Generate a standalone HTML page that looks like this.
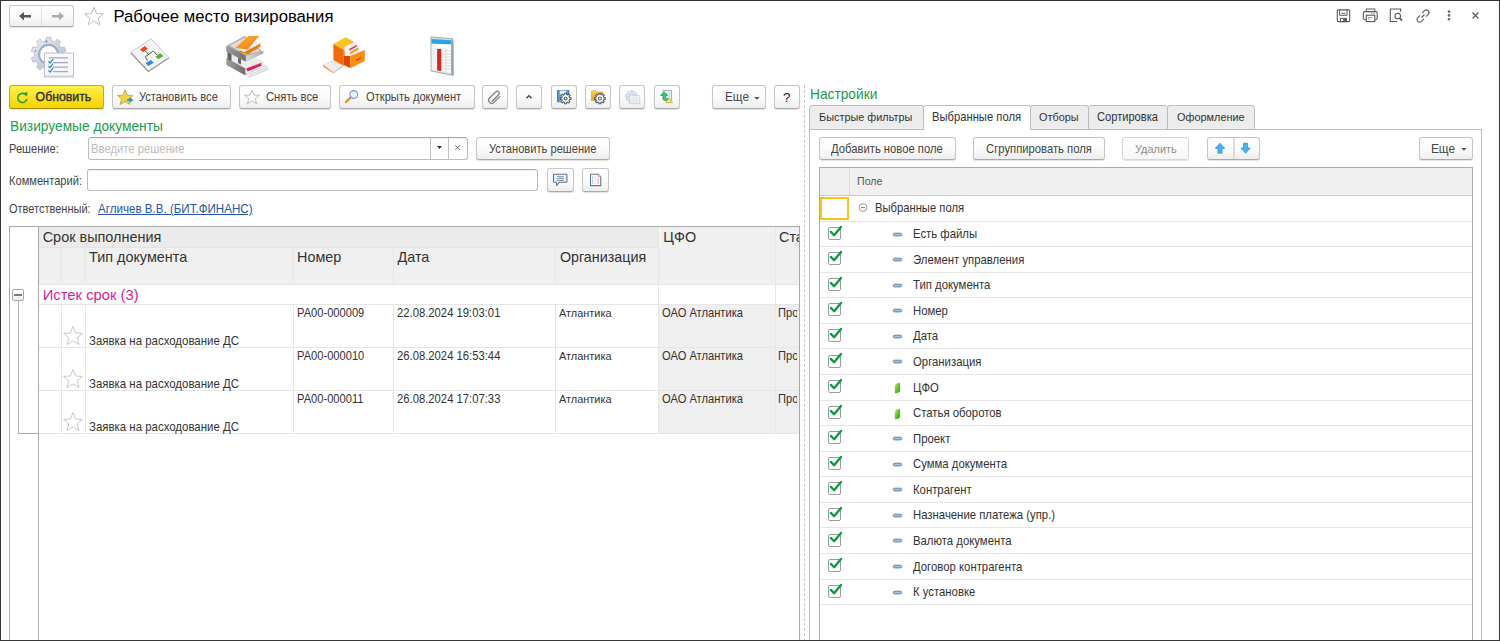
<!DOCTYPE html><html><head><meta charset="utf-8"><style>
*{margin:0;padding:0}
html,body{width:1500px;height:641px;overflow:hidden;background:#fff}
body{position:relative;font-family:"Liberation Sans",sans-serif}
.t{position:absolute;line-height:0;white-space:nowrap;z-index:3}
.btn{position:absolute;box-sizing:border-box;border:1px solid #c6c6c6;border-bottom-color:#a9a9a9;border-radius:3px;background:linear-gradient(#ffffff 0%,#fbfbfb 50%,#eeeeee 100%);box-shadow:0 1px 1px rgba(0,0,0,0.12)}
.ybtn{border-color:#c7ad00;border-bottom-color:#a89000;background:linear-gradient(#fff04a 0%,#fde024 50%,#f2d400 100%)}
.dis{background:linear-gradient(#fff,#f7f7f7);border-color:#d6d6d6}
.inp{position:absolute;box-sizing:border-box;border:1px solid #bcbcbc;border-top-color:#a8a8a8;border-radius:3px;background:#fff;box-shadow:inset 0 1px 1px rgba(0,0,0,0.06)}
.tab{position:absolute;box-sizing:border-box;border:1px solid #bdbdbd;border-radius:3px 3px 0 0;background:#ececec}
.tab.act{background:#fff;border-bottom:none;z-index:2}
.chk{position:absolute;width:13px;height:13px;box-sizing:border-box;border:1px solid #9b9b9b;border-radius:2px;background:#fff}
#frame{position:absolute;left:0;top:0;width:1500px;height:641px;box-sizing:border-box;border:1px solid #363636;z-index:50;pointer-events:none}
</style></head><body><div class="btn" style="left:9px;top:5px;width:65px;height:22px;"></div>
<div style="position:absolute;left:41px;top:6px;width:1px;height:20px;background:#e0e0e0"></div>
<svg style="position:absolute;left:18px;top:11px" width="16" height="10" viewBox="0 0 16 10"><path d="M1 5 L6 1 L6 4 L13 4 L13 6.5 L6 6.5 L6 9.5 Z" fill="#555"/></svg>
<svg style="position:absolute;left:50px;top:11px" width="16" height="10" viewBox="0 0 16 10"><path d="M14 5 L9 1 L9 4 L2 4 L2 6.5 L9 6.5 L9 9.5 Z" fill="#aaa"/></svg>
<svg style="position:absolute;left:83px;top:6px" width="22" height="20" viewBox="0 0 22 20"><path d="M11 1.2 L13.6 7.6 L20.4 7.9 L15.1 12.2 L16.9 18.9 L11 15.1 L5.1 18.9 L6.9 12.2 L1.6 7.9 L8.4 7.6 Z" fill="none" stroke="#b9c1c9" stroke-width="1"/></svg>
<div class="t" style="left:113.5px;top:17.11px;font-size:16.70px;color:#000;">Рабочее место визирования</div>
<svg style="position:absolute;left:1336px;top:9px" width="16" height="14" viewBox="0 0 16 14"><rect x="1.3" y="0.9" width="12.4" height="11.7" rx="1.2" fill="none" stroke="#5a5a5a" stroke-width="1.1"/><path d="M3.6 1 V6.3 H11 V1" fill="none" stroke="#5a5a5a" stroke-width="1"/><path d="M5.2 4.3 H9.5" stroke="#5a5a5a" stroke-width="0.9"/><rect x="4.4" y="9.4" width="6" height="3.2" fill="none" stroke="#5a5a5a" stroke-width="1"/><rect x="7.2" y="9.6" width="2.8" height="2.8" fill="#5a5a5a"/></svg>
<svg style="position:absolute;left:1362px;top:8px" width="17" height="15" viewBox="0 0 17 15"><rect x="4.3" y="1" width="8.5" height="2.6" fill="none" stroke="#5a5a5a" stroke-width="1"/><rect x="1.3" y="3.6" width="13.9" height="8.1" rx="1.6" fill="none" stroke="#5a5a5a" stroke-width="1.1"/><path d="M9.3 5.4 H10.3 M11.6 5.4 H12.6" stroke="#5a5a5a" stroke-width="0.9"/><rect x="4.3" y="7.2" width="8.5" height="6.4" fill="#fff" stroke="#5a5a5a" stroke-width="1.1"/><path d="M6 9.6 H10.2 M6 10.9 H7.5" stroke="#888" stroke-width="0.8"/></svg>
<svg style="position:absolute;left:1389px;top:8px" width="15" height="15" viewBox="0 0 15 15"><path d="M8.2 13.5 H1.3 V1 H11.7 V3.8" fill="none" stroke="#5a5a5a" stroke-width="1.1"/><circle cx="8.7" cy="8" r="2.8" fill="none" stroke="#5a5a5a" stroke-width="1.1"/><path d="M10.7 10.1 L13.2 12.6" stroke="#5a5a5a" stroke-width="1.6"/></svg>
<svg style="position:absolute;left:1415px;top:8px" width="16" height="15" viewBox="0 0 16 15"><path d="M6.5 9.5 L9.5 6.5" stroke="#666" stroke-width="1.2"/><path d="M7.2 5 L9.5 2.7 a2.6 2.6 0 0 1 3.7 3.7 L10.9 8.7" fill="none" stroke="#666" stroke-width="1.2"/><path d="M8.8 11 L6.5 13.3 a2.6 2.6 0 0 1 -3.7 -3.7 L5.1 7.3" fill="none" stroke="#666" stroke-width="1.2"/></svg>
<svg style="position:absolute;left:1446.2px;top:10px" width="6" height="11" viewBox="0 0 6 11"><circle cx="3" cy="1.6" r="1.3" fill="#666"/><circle cx="3" cy="5.4" r="1.3" fill="#666"/><circle cx="3" cy="9.2" r="1.3" fill="#666"/></svg>
<svg style="position:absolute;left:1471px;top:11px" width="9" height="9" viewBox="0 0 9 9"><path d="M1.5 1.5 L7.5 7.5 M7.5 1.5 L1.5 7.5" stroke="#555" stroke-width="1.1"/></svg>
<svg style="position:absolute;left:28px;top:32px" width="52" height="48" viewBox="0 0 52 48">
<defs><linearGradient id="gg" x1="0" y1="0" x2="0.8" y2="1"><stop offset="0" stop-color="#eef1f5"/><stop offset="0.55" stop-color="#c9d3de"/><stop offset="1" stop-color="#a9bdd3"/></linearGradient></defs>
<path d="M18.12,8.52 L18.30,5.15 L22.90,5.15 L23.08,8.52 L26.81,9.73 L28.93,7.11 L32.66,9.82 L30.83,12.65 L33.13,15.82 L36.39,14.95 L37.81,19.33 L34.66,20.54 L34.66,24.46 L37.81,25.67 L36.39,30.05 L33.13,29.18 L30.83,32.35 L32.66,35.18 L28.93,37.89 L26.81,35.27 L23.08,36.48 L22.90,39.85 L18.30,39.85 L18.12,36.48 L14.39,35.27 L12.27,37.89 L8.54,35.18 L10.37,32.35 L8.07,29.18 L4.81,30.05 L3.39,25.67 L6.54,24.46 L6.54,20.54 L3.39,19.33 L4.81,14.95 L8.07,15.82 L10.37,12.65 L8.54,9.82 L12.27,7.11 L14.39,9.73 Z" fill="url(#gg)" stroke="#a7b6c6" stroke-width="0.7" stroke-linejoin="round"/>
<circle cx="20.6" cy="22.5" r="9.6" fill="#fff" stroke="#9db0c5" stroke-width="2.2"/>
<circle cx="18.5" cy="9.5" r="0.9" fill="#6d7d90"/>
<circle cx="7.5" cy="19" r="0.8" fill="#6d7d90"/>
<rect x="16.5" y="21" width="29" height="24" fill="#f6f7f9" stroke="#b7bcc6" stroke-width="0.9"/>
<rect x="17" y="43.5" width="28.5" height="1.5" fill="#cfd3da"/>
<path d="M21 25.8 H40 M25 30.7 H40 M25 35.2 H40 M25 39.7 H40" stroke="#a8a4c4" stroke-width="1.3"/>
<path d="M20.5 29.5 l1.6 1.6 l3 -4 M20.5 34 l1.6 1.6 l3 -4 M20.5 38.5 l1.6 1.6 l3 -4" stroke="#2a86d6" stroke-width="1.3" fill="none"/>
</svg>
<svg style="position:absolute;left:125px;top:34px" width="50" height="42" viewBox="0 0 50 42">
<path d="M5.6 18.3 L25.9 4.9 L43.9 23.6 L23.3 37 Z" fill="#f5f5f7" stroke="#c9c9c9" stroke-width="1" stroke-linejoin="round"/>
<path d="M6 19 L23.3 37.5 L43.9 24" fill="none" stroke="#9a9a9a" stroke-width="1.2" stroke-linejoin="round"/>
<path d="M20.5 17 L23.5 20.5 L27.5 17.5 Q28.5 17 29.5 18 L32 21 M23.5 20.5 L20.5 22.5 Q20 23 20.5 23.5 L22.5 26.5" fill="none" stroke="#3a3a3a" stroke-width="0.9"/>
<path d="M15.1 15.4 L19.7 12.1 L22.9 14.7 L18 18.3 Z" fill="#ee4a12"/>
<path d="M30.5 22.6 L35.4 19.3 L38.3 22 L33.4 25.2 Z" fill="#5bb22c"/>
<path d="M20.6 29.2 L25.9 25.9 L28.8 28.8 L23.3 32.1 Z" fill="#2f88dc"/>
</svg>
<svg style="position:absolute;left:220px;top:32px" width="55" height="48" viewBox="0 0 55 48">
<defs>
<linearGradient id="tL" x1="0" y1="0" x2="1" y2="0"><stop offset="0" stop-color="#9c9c9c"/><stop offset="1" stop-color="#6f6f6f"/></linearGradient>
<linearGradient id="tR" x1="0" y1="0" x2="1" y2="0"><stop offset="0" stop-color="#d8d8d8"/><stop offset="1" stop-color="#a9a9a9"/></linearGradient>
<linearGradient id="tO" x1="0" y1="0" x2="1" y2="1"><stop offset="0" stop-color="#ffb13b"/><stop offset="1" stop-color="#f07c0a"/></linearGradient>
</defs>
<path d="M6.4 26 L22 18 L44 30 L25.5 37 Z" fill="#ececec"/>
<path d="M6.4 26 L25.5 36.5 L25.5 43.4 L6.4 33 Z" fill="url(#tL)"/>
<path d="M25.5 36.5 L42 30 L42 35 L25.5 43.4 Z" fill="#bdbdbd"/>
<path d="M25.5 38.5 L44 31 L48 37.5 L29 45.7 Z" fill="#f7f7f7" stroke="#cfcfcf" stroke-width="0.4"/>
<path d="M28 41.3 L46.5 33.8 M28.8 43 L47.3 35.5 M29.5 44.6 L48 37.2" stroke="#b5b5b5" stroke-width="0.55"/>
<path d="M26.6 36.6 L40.8 31.3 L41.6 33.8 L27.4 39.4 Z" fill="#e8175a"/>
<path d="M7.5 19 L11.5 21 L11.5 29 L7.5 27 Z" fill="#5f5f5f"/>
<path d="M18 24.5 L21 26 L21 32.5 L18 31 Z" fill="#6a6a6a"/>
<path d="M6.4 13.9 L24.7 4.1 L43.4 20.5 L25.8 29.6 L6.4 19.5 Z" fill="#a7a7a7"/>
<path d="M6.4 13.9 L25.8 23.8 L25.8 29.6 L6.4 19.5 Z" fill="url(#tL)"/>
<path d="M25.8 23.8 L43.4 19 L43.4 21.5 L25.8 29.6 Z" fill="url(#tR)"/>
<path d="M9.5 13.6 L24.6 5.6 L40.5 19.2 L25.8 22.8 Z" fill="#dedede"/>
<path d="M17.5 19.5 L40.4 11.2 L40.4 14.5 L28 22.5 Z" fill="#f07a0a"/>
<path d="M19.5 17.8 L37 9.5 L38.8 12.3 L24 20.3 Z" fill="#f2f4f8"/>
<path d="M15 16 L28.5 4.1 L39.3 4.1 L27.5 17.5 Z" fill="url(#tO)"/>
</svg>
<svg style="position:absolute;left:318px;top:32px" width="54" height="48" viewBox="0 0 54 48">
<path d="M5.2 33 L15 28.5 L24.7 33.5 L15.5 40.4 Z" fill="#ededed" stroke="#c8c8c8" stroke-width="0.5"/>
<path d="M5.2 33 L15.5 40.4 L15.5 41.2 L5.2 34.5 Z" fill="#f07a1a"/>
<path d="M15.5 40.4 L24.7 33.5 L24.7 35 L15.5 41.2 Z" fill="#bdbdbd"/>
<path d="M15.4 12 L27.7 5.2 L35.2 9.4 L25.8 18 Z" fill="#ffc21e"/>
<path d="M15.4 12 L25.8 18 L25.8 33.7 L15.4 28 Z" fill="#f06b0c"/>
<path d="M25.8 18 L35.2 9.4 L35.2 22 L25.8 24 Z" fill="#ff8d18"/>
<path d="M26.2 15 L37 9.7 L41.2 14 L41.2 24.7 L27 24 Z" fill="#f0f0f0"/>
<path d="M31 17 L38.5 13 L39 14.5 L31.5 18.5 Z" fill="#ec2a6e"/>
<path d="M32 20 L40.5 15.5 L40.8 17.5 L32.5 22 Z" fill="#f69a1e"/>
<path d="M25.8 24 L32.2 24 L32.2 36 L25.8 33 Z" fill="#e2430a"/>
<path d="M32.2 24 L46.8 18 L46.8 29 L32.2 36.3 Z" fill="#ff8a12"/>
<path d="M38.2 28.5 L43 26" stroke="#b2520a" stroke-width="1.2"/>
</svg>
<svg style="position:absolute;left:420px;top:32px" width="45" height="48" viewBox="0 0 45 48">
<path d="M10.9 4.9 L33 6.7 L33.3 43.4 L11.2 39 Z" fill="#d5dce4" stroke="#8e9bab" stroke-width="0.8"/>
<path d="M11.6 7.1 L31.1 8.3 L31.1 12.4 L11.6 11.6 Z" fill="#27a2e6"/>
<path d="M11.8 12 L31 12.6 L31 41 L11.8 38 Z" fill="#fbfbfb"/>
<path d="M11.8 12 L16.5 12.2 L16.5 38.7 L11.8 38 Z" fill="#eef3f8"/>
<path d="M17.1 16.9 L21.3 17 L21.3 39 L17.1 38.6 Z" fill="#d8261a"/>
<path d="M21.5 19 H31 M21.5 22 H31 M21.5 25 H31 M21.5 28 H31 M21.5 31 H31 M21.5 34 H31 M21.5 37 H31" stroke="#c9c9c9" stroke-width="0.6"/>
<path d="M26 17 V40" stroke="#c9c9c9" stroke-width="0.6"/>
<path d="M31 8 L33.3 8.5 L33.3 43.4 L31 42 Z" fill="#98a6b6"/>
</svg>
<div class="btn ybtn" style="left:9px;top:85px;width:95px;height:24px"></div>
<svg style="position:absolute;left:16px;top:91px" width="13" height="13" viewBox="0 0 13 13"><path d="M10.2 4.3 A4.6 4.6 0 1 0 10.9 8" fill="none" stroke="#1fa23a" stroke-width="1.6"/><path d="M7.6 1.8 L11.6 1.2 L11.2 5.6 Z" fill="#1fa23a"/></svg>
<div class="t" style="left:35.6px;top:96.74px;font-size:12.30px;color:#333;-webkit-text-stroke:0.4px #333;">Обновить</div>
<div class="btn" style="left:112px;top:85px;width:119px;height:24px;"></div>
<svg style="position:absolute;left:117px;top:89px" width="18" height="17" viewBox="0 0 18 17"><path d="M8 1 L10.2 6.2 L15.8 6.5 L11.5 10 L13 15.5 L8 12.4 L3 15.5 L4.5 10 L0.5 6.5 L5.8 6.2 Z" fill="#f0d243" stroke="#b89a20" stroke-width="0.7"/><path d="M10 11 h5 l-2 -2 M15 11 l-2 2" fill="#2a8ee0" stroke="#2a8ee0" stroke-width="1.4"/></svg>
<div class="t" style="left:138.9px;top:97.45px;font-size:11.99px;color:#444;transform:scaleX(0.9259);transform-origin:0 0;">Установить все</div>
<div class="btn" style="left:239px;top:85px;width:92px;height:24px;"></div>
<svg style="position:absolute;left:244px;top:89px" width="17" height="16" viewBox="0 0 17 16"><path d="M8 1.2 L10 6 L15.3 6.3 L11.2 9.7 L12.6 14.8 L8 11.9 L3.4 14.8 L4.8 9.7 L0.7 6.3 L6 6 Z" fill="#fafafa" stroke="#b5b5b5" stroke-width="0.9"/></svg>
<div class="t" style="left:265.6px;top:97.39px;font-size:12.15px;color:#444;transform:scaleX(0.9259);transform-origin:0 0;">Снять все</div>
<div class="btn" style="left:339px;top:85px;width:136px;height:24px;"></div>
<svg style="position:absolute;left:343px;top:88px" width="16" height="16" viewBox="0 0 16 16"><path d="M7.3 9.8 L3 14" stroke="#e5911c" stroke-width="2.3" stroke-linecap="round"/><circle cx="10.7" cy="6.5" r="3.9" fill="#e4f6fd" stroke="#7896da" stroke-width="1.1"/></svg>
<div class="t" style="left:365.6px;top:97.42px;font-size:12.06px;color:#444;transform:scaleX(0.9259);transform-origin:0 0;">Открыть документ</div>
<div class="btn" style="left:482px;top:85px;width:26px;height:24px;"></div>
<svg style="position:absolute;left:487px;top:89px" width="16" height="16" viewBox="0 0 16 16"><path d="M5.2 12.3 L11.6 5.8 a2 2 0 0 0 -2.9 -2.9 L2.6 9 a3.1 3.1 0 0 0 4.4 4.4 L12.8 7.6" fill="none" stroke="#7a7a7a" stroke-width="1.25" stroke-linecap="round"/></svg>
<div class="btn" style="left:516px;top:85px;width:26px;height:24px;"></div>
<svg style="position:absolute;left:524px;top:93px" width="10" height="7" viewBox="0 0 10 7"><path d="M2.5 5.2 L5 2.6 L7.5 5.2" fill="none" stroke="#3a3a3a" stroke-width="1.3"/></svg>
<div class="btn" style="left:551px;top:85px;width:26px;height:24px;"></div>
<svg style="position:absolute;left:557px;top:90px" width="17" height="15" viewBox="0 0 17 15"><defs><linearGradient id="fl" x1="0" y1="0" x2="1" y2="0"><stop offset="0" stop-color="#3f7fcf"/><stop offset="0.5" stop-color="#a9cdf3"/><stop offset="1" stop-color="#3f7fcf"/></linearGradient></defs><path d="M0 0.2 H12 V10 L11 11.8 H0 Z" fill="url(#fl)" stroke="#2f66b0" stroke-width="0.6"/><rect x="3" y="0.8" width="6" height="3.5" fill="#f4f7fb" stroke="#9fb6d0" stroke-width="0.5"/><g transform="translate(0,0)"><path d="M7.69,4.60 L7.65,3.18 L9.55,3.18 L9.51,4.60 L10.71,5.10 L11.69,4.07 L13.03,5.41 L12.00,6.39 L12.50,7.59 L13.92,7.55 L13.92,9.45 L12.50,9.41 L12.00,10.61 L13.03,11.59 L11.69,12.93 L10.71,11.90 L9.51,12.40 L9.55,13.82 L7.65,13.82 L7.69,12.40 L6.49,11.90 L5.51,12.93 L4.17,11.59 L5.20,10.61 L4.70,9.41 L3.28,9.45 L3.28,7.55 L4.70,7.59 L5.20,6.39 L4.17,5.41 L5.51,4.07 L6.49,5.10 Z" fill="#fff" stroke="#56606a" stroke-width="1.1" stroke-linejoin="round"/><circle cx="8.6" cy="8.5" r="1.5" fill="none" stroke="#56606a" stroke-width="1.1"/></g></svg>
<div class="btn" style="left:585px;top:85px;width:26px;height:24px;"></div>
<svg style="position:absolute;left:591px;top:90px" width="17" height="15" viewBox="0 0 17 15"><defs><linearGradient id="fo" x1="0" y1="0" x2="0" y2="1"><stop offset="0" stop-color="#ffd34a"/><stop offset="1" stop-color="#e9a21c"/></linearGradient></defs><path d="M0.3 2 Q0.5 0.8 1.5 0.8 H4.5 L6 2 H12 V10.5 H0.3 Z" fill="url(#fo)" stroke="#d28f18" stroke-width="0.5"/><path d="M7.99,4.60 L7.95,3.18 L9.85,3.18 L9.81,4.60 L11.01,5.10 L11.99,4.07 L13.33,5.41 L12.30,6.39 L12.80,7.59 L14.22,7.55 L14.22,9.45 L12.80,9.41 L12.30,10.61 L13.33,11.59 L11.99,12.93 L11.01,11.90 L9.81,12.40 L9.85,13.82 L7.95,13.82 L7.99,12.40 L6.79,11.90 L5.81,12.93 L4.47,11.59 L5.50,10.61 L5.00,9.41 L3.58,9.45 L3.58,7.55 L5.00,7.59 L5.50,6.39 L4.47,5.41 L5.81,4.07 L6.79,5.10 Z" fill="#fff" stroke="#56606a" stroke-width="1.1" stroke-linejoin="round"/><circle cx="8.9" cy="8.5" r="1.5" fill="none" stroke="#56606a" stroke-width="1.1"/></svg>
<div class="btn" style="left:619px;top:85px;width:26px;height:24px;"></div>
<svg style="position:absolute;left:625px;top:90px" width="16" height="15" viewBox="0 0 16 15"><path d="M5.57,1.99 L5.58,0.67 L7.42,0.67 L7.43,1.99 L8.69,2.45 L9.54,1.44 L10.95,2.63 L10.11,3.65 L10.78,4.80 L12.08,4.58 L12.40,6.40 L11.10,6.63 L10.87,7.95 L12.01,8.61 L11.09,10.21 L9.94,9.56 L8.91,10.42 L9.36,11.66 L7.63,12.29 L7.17,11.05 L5.83,11.05 L5.37,12.29 L3.64,11.66 L4.09,10.42 L3.06,9.56 L1.91,10.21 L0.99,8.61 L2.13,7.95 L1.90,6.63 L0.60,6.40 L0.92,4.58 L2.22,4.80 L2.89,3.65 L2.05,2.63 L3.46,1.44 L4.31,2.45 Z" fill="#e3ecf5" stroke="#b7cbe0" stroke-width="0.9" stroke-linejoin="round"/><circle cx="6.5" cy="6.5" r="2.6" fill="#fff" stroke="#a9c2dc" stroke-width="0.9"/><rect x="4.6" y="5.8" width="10.2" height="7.9" fill="#f6f8fa" stroke="#c6ced6" stroke-width="0.8"/><path d="M7.5 8 H13.5 M7.5 10 H13.5 M7.5 12 H13.5" stroke="#c9d2dc" stroke-width="0.7"/><path d="M5.3 9.5 l0.8 0.8 l1.2 -1.5 M5.3 11.5 l0.8 0.8 l1.2 -1.5" stroke="#a9c6e6" stroke-width="0.6" fill="none"/></svg>
<div class="btn" style="left:654px;top:85px;width:26px;height:24px;"></div>
<svg style="position:absolute;left:659px;top:89px" width="15" height="15" viewBox="0 0 15 15"><rect x="4" y="1.5" width="8.5" height="9.5" fill="#edf0f3" stroke="#93a0ad" stroke-width="0.8"/><path d="M6 4 H10.5 V9" fill="none" stroke="#c9d0d7" stroke-width="0.8"/><path d="M1.5 6.5 L5.2 3 L8.8 6.5 H6.6 V8.6 Q6.6 9.6 7.6 9.6 H9.5 V11.5 H6.8 Q4.3 11.5 4.3 9 V6.5 Z" fill="#22d36e" stroke="#14a045" stroke-width="0.7" stroke-linejoin="round"/><path d="M6.5 13.6 L10 9.2 L13.6 13.6 Z" fill="#f6e27a" stroke="#d3a92a" stroke-width="0.8" stroke-linejoin="round"/></svg>
<div class="btn" style="left:712px;top:85px;width:54px;height:24px;"></div>
<div class="t" style="left:724.5px;top:96.88px;font-size:12.74px;color:#444;transform:scaleX(0.9259);transform-origin:0 0;">Еще</div>
<svg style="position:absolute;left:754px;top:97px" width="6" height="4" viewBox="0 0 6 4"><path d="M0.2 0 H5.6 L2.9 2.8 Z" fill="#555"/></svg>
<div class="btn" style="left:774px;top:85px;width:26px;height:24px;"></div>
<div class="t" style="left:783px;top:98.32px;font-size:13.50px;color:#222;">?</div>
<div class="t" style="left:9.5px;top:125.90px;font-size:14.71px;color:#1c9b4b;transform:scaleX(0.9346);transform-origin:0 0;">Визируемые документы</div>
<div class="t" style="left:9.4px;top:149.45px;font-size:11.99px;color:#444;transform:scaleX(0.9259);transform-origin:0 0;">Решение:</div>
<div class="inp" style="left:88px;top:137px;width:380px;height:23px"></div>
<div style="position:absolute;left:430px;top:138px;width:1px;height:21px;background:#c2c2c2"></div>
<div style="position:absolute;left:448px;top:138px;width:1px;height:21px;background:#c2c2c2"></div>
<svg style="position:absolute;left:436.5px;top:146px" width="5" height="4" viewBox="0 0 5 4"><path d="M0 0 H5 L2.5 3 Z" fill="#333"/></svg>
<svg style="position:absolute;left:454px;top:144px" width="8" height="8" viewBox="0 0 8 8"><path d="M1.3 1.3 L5.9 5.9 M5.9 1.3 L1.3 5.9" stroke="#555" stroke-width="0.9"/></svg>
<div class="t" style="left:91px;top:148.87px;font-size:12.20px;color:#bdbdbd;transform:scaleX(0.9259);transform-origin:0 0;">Введите решение</div>
<div class="btn" style="left:476px;top:137px;width:134px;height:23px;"></div>
<div class="t" style="left:488.5px;top:148.93px;font-size:12.03px;color:#444;transform:scaleX(0.9259);transform-origin:0 0;">Установить решение</div>
<div class="t" style="left:9.4px;top:180.75px;font-size:11.99px;color:#444;transform:scaleX(0.9259);transform-origin:0 0;">Комментарий:</div>
<div class="inp" style="left:87px;top:169px;width:451px;height:22px"></div>
<div class="btn" style="left:547px;top:168px;width:27px;height:24px;"></div>
<svg style="position:absolute;left:551px;top:172px" width="19" height="16" viewBox="0 0 19 16"><path d="M3.2 2.3 Q2.5 2.3 2.5 3 V9.6 Q2.5 10.3 3.2 10.3 H5.4 L5.6 13.5 L8.2 10.3 H15.2 Q15.9 10.3 15.9 9.6 V3 Q15.9 2.3 15.2 2.3 Z" fill="#eef4fb" stroke="#5d7693" stroke-width="1.1" stroke-linejoin="round"/><path d="M6 4.7 H12.8 M6 6.6 H12.8 M6 8.5 H12.8" stroke="#6f849c" stroke-width="0.9"/></svg>
<div class="btn" style="left:582px;top:168px;width:27px;height:24px;"></div>
<svg style="position:absolute;left:588px;top:172px" width="15" height="16" viewBox="0 0 15 16"><path d="M2.5 2.3 H10.3 L12.8 4.8 V13.6 H2.5 Z" fill="#fbfbfc" stroke="#5d7693" stroke-width="1.1" stroke-linejoin="round"/><path d="M10.3 2.3 V4.8 H12.8" fill="#dfe6ee" stroke="#8a9bb0" stroke-width="0.6"/><path d="M4.6 4.6 V5.4 M4.6 6.6 V7.4 M4.6 8.6 V9.4 M4.6 10.6 V11.6" stroke="#4f8fd0" stroke-width="1"/><path d="M7.2 4.6 V12.2" stroke="#c9c9c9" stroke-width="1" stroke-dasharray="1 1"/><path d="M10.2 6.6 V7.4 M10.2 8.6 V9.4 M10.2 10.6 V11.6" stroke="#f05a3a" stroke-width="1.1"/></svg>
<div class="t" style="left:9.4px;top:209.08px;font-size:11.88px;color:#444;transform:scaleX(0.9259);transform-origin:0 0;">Ответственный:</div>
<div class="t" style="left:98px;top:208.86px;font-size:12.53px;color:#2255aa;transform:scaleX(0.9259);transform-origin:0 0;text-decoration:underline;">Агличев В.В. (БИТ.ФИНАНС)</div>
<div style="position:absolute;left:0;top:0;width:799px;height:641px;overflow:hidden">
<div style="position:absolute;left:9px;top:226px;width:791px;height:415px;border:1px solid #a9a9a9;border-bottom:none;box-sizing:border-box;background:#fff"></div>
<div style="position:absolute;left:39px;top:227px;width:760px;height:57px;background:#f0f0f0"></div>
<div style="position:absolute;left:38px;top:227px;width:1px;height:414px;background:#a9a9a9"></div>
<div style="position:absolute;left:39px;top:227px;width:619px;height:20px;background:#ebebeb"></div>
<div style="position:absolute;left:659px;top:227px;width:2px;height:21px;background:#f5f5f5"></div>
<div style="position:absolute;left:39px;top:247px;width:620px;height:1px;background:#e4e4e4"></div>
<div style="position:absolute;left:61px;top:248px;width:1px;height:36px;background:#e6e6e6"></div>
<div style="position:absolute;left:85px;top:248px;width:1px;height:36px;background:#e6e6e6"></div>
<div style="position:absolute;left:293px;top:248px;width:1px;height:36px;background:#e6e6e6"></div>
<div style="position:absolute;left:393px;top:248px;width:1px;height:36px;background:#e6e6e6"></div>
<div style="position:absolute;left:555px;top:248px;width:1px;height:36px;background:#e6e6e6"></div>
<div style="position:absolute;left:658px;top:227px;width:1px;height:57px;background:#e6e6e6"></div>
<div style="position:absolute;left:775px;top:227px;width:1px;height:57px;background:#e6e6e6"></div>
<div class="t" style="left:42.7px;top:236.79px;font-size:14.45px;color:#333;">Срок выполнения</div>
<div class="t" style="left:89px;top:256.61px;font-size:14.40px;color:#333;">Тип документа</div>
<div class="t" style="left:297px;top:256.61px;font-size:14.40px;color:#333;">Номер</div>
<div class="t" style="left:397.5px;top:256.61px;font-size:14.40px;color:#333;">Дата</div>
<div class="t" style="left:559.9px;top:256.65px;font-size:14.30px;color:#333;">Организация</div>
<div class="t" style="left:663.3px;top:236.81px;font-size:14.40px;color:#333;">ЦФО</div>
<div class="t" style="left:779px;top:236.81px;font-size:14.40px;color:#333;">Статья</div>
<div style="position:absolute;left:39px;top:284px;width:760px;height:1px;background:#e6e6e6"></div>
<div style="position:absolute;left:658px;top:285px;width:1px;height:20px;background:#e6e6e6"></div>
<div style="position:absolute;left:775px;top:285px;width:1px;height:20px;background:#e6e6e6"></div>
<div class="t" style="left:42.7px;top:294.67px;font-size:14.80px;color:#d4239b;">Истек срок (3)</div>
<div style="position:absolute;left:39px;top:304px;width:760px;height:1px;background:#e6e6e6"></div>
<div style="position:absolute;left:12px;top:289px;width:12px;height:12px;border:1px solid #a9a9a9;box-sizing:border-box;background:linear-gradient(#fff,#ededed);border-radius:2px"></div>
<div style="position:absolute;left:14px;top:294px;width:8px;height:1.6px;background:#7a7a7a"></div>
<div style="position:absolute;left:18px;top:301px;width:1px;height:133px;background:#b0b0b0"></div>
<div style="position:absolute;left:18px;top:433px;width:20px;height:1px;background:#a9a9a9"></div>
<div style="position:absolute;left:658px;top:305px;width:117px;height:42px;background:#efefef"></div>
<div style="position:absolute;left:776px;top:305px;width:23px;height:42px;background:#efefef"></div>
<div style="position:absolute;left:61px;top:305px;width:1px;height:42px;background:#e6e6e6"></div>
<div style="position:absolute;left:85px;top:305px;width:1px;height:42px;background:#e6e6e6"></div>
<div style="position:absolute;left:293px;top:305px;width:1px;height:42px;background:#e6e6e6"></div>
<div style="position:absolute;left:393px;top:305px;width:1px;height:42px;background:#e6e6e6"></div>
<div style="position:absolute;left:555px;top:305px;width:1px;height:42px;background:#e6e6e6"></div>
<div style="position:absolute;left:658px;top:305px;width:1px;height:42px;background:#e6e6e6"></div>
<div style="position:absolute;left:775px;top:305px;width:1px;height:42px;background:#e6e6e6"></div>
<div style="position:absolute;left:39px;top:347px;width:760px;height:1px;background:#e6e6e6"></div>
<svg style="position:absolute;left:62px;top:325px" width="22" height="22" viewBox="0 0 22 22"><path d="M11 1.5 L13.6 8 L20.5 8.4 L15.2 12.8 L17 19.6 L11 15.8 L5 19.6 L6.8 12.8 L1.5 8.4 L8.4 8 Z" fill="#fff" stroke="#c9c9c9" stroke-width="1"/></svg>
<div class="t" style="left:296.6px;top:312.63px;font-size:12.03px;color:#333;transform:scaleX(0.9259);transform-origin:0 0;">РА00-000009</div>
<div class="t" style="left:397.2px;top:312.58px;font-size:12.18px;color:#333;transform:scaleX(0.9259);transform-origin:0 0;">22.08.2024 19:03:01</div>
<div class="t" style="left:558.5px;top:312.71px;font-size:11.82px;color:#333;transform:scaleX(0.9259);transform-origin:0 0;">Атлантика</div>
<div class="t" style="left:662.1px;top:312.62px;font-size:12.06px;color:#333;transform:scaleX(0.9259);transform-origin:0 0;">ОАО Атлантика</div>
<div style="position:absolute;left:776px;top:305px;width:21px;height:42px;overflow:hidden"><div style="position:absolute;left:-776px;top:-305px">
<div class="t" style="left:778.1px;top:312.62px;font-size:12.06px;color:#333;transform:scaleX(0.9259);transform-origin:0 0;">Проект</div>
</div></div>
<div class="t" style="left:88.6px;top:340.52px;font-size:12.37px;color:#333;transform:scaleX(0.9259);transform-origin:0 0;">Заявка на расходование ДС</div>
<div style="position:absolute;left:658px;top:348px;width:117px;height:42px;background:#efefef"></div>
<div style="position:absolute;left:776px;top:348px;width:23px;height:42px;background:#efefef"></div>
<div style="position:absolute;left:61px;top:348px;width:1px;height:42px;background:#e6e6e6"></div>
<div style="position:absolute;left:85px;top:348px;width:1px;height:42px;background:#e6e6e6"></div>
<div style="position:absolute;left:293px;top:348px;width:1px;height:42px;background:#e6e6e6"></div>
<div style="position:absolute;left:393px;top:348px;width:1px;height:42px;background:#e6e6e6"></div>
<div style="position:absolute;left:555px;top:348px;width:1px;height:42px;background:#e6e6e6"></div>
<div style="position:absolute;left:658px;top:348px;width:1px;height:42px;background:#e6e6e6"></div>
<div style="position:absolute;left:775px;top:348px;width:1px;height:42px;background:#e6e6e6"></div>
<div style="position:absolute;left:39px;top:390px;width:760px;height:1px;background:#e6e6e6"></div>
<svg style="position:absolute;left:62px;top:368px" width="22" height="22" viewBox="0 0 22 22"><path d="M11 1.5 L13.6 8 L20.5 8.4 L15.2 12.8 L17 19.6 L11 15.8 L5 19.6 L6.8 12.8 L1.5 8.4 L8.4 8 Z" fill="#fff" stroke="#c9c9c9" stroke-width="1"/></svg>
<div class="t" style="left:296.6px;top:355.63px;font-size:12.03px;color:#333;transform:scaleX(0.9259);transform-origin:0 0;">РА00-000010</div>
<div class="t" style="left:397.2px;top:355.58px;font-size:12.18px;color:#333;transform:scaleX(0.9259);transform-origin:0 0;">26.08.2024 16:53:44</div>
<div class="t" style="left:558.5px;top:355.71px;font-size:11.82px;color:#333;transform:scaleX(0.9259);transform-origin:0 0;">Атлантика</div>
<div class="t" style="left:662.1px;top:355.62px;font-size:12.06px;color:#333;transform:scaleX(0.9259);transform-origin:0 0;">ОАО Атлантика</div>
<div style="position:absolute;left:776px;top:348px;width:21px;height:42px;overflow:hidden"><div style="position:absolute;left:-776px;top:-348px">
<div class="t" style="left:778.1px;top:355.62px;font-size:12.06px;color:#333;transform:scaleX(0.9259);transform-origin:0 0;">Проект</div>
</div></div>
<div class="t" style="left:88.6px;top:383.52px;font-size:12.37px;color:#333;transform:scaleX(0.9259);transform-origin:0 0;">Заявка на расходование ДС</div>
<div style="position:absolute;left:658px;top:391px;width:117px;height:42px;background:#efefef"></div>
<div style="position:absolute;left:776px;top:391px;width:23px;height:42px;background:#efefef"></div>
<div style="position:absolute;left:61px;top:391px;width:1px;height:42px;background:#e6e6e6"></div>
<div style="position:absolute;left:85px;top:391px;width:1px;height:42px;background:#e6e6e6"></div>
<div style="position:absolute;left:293px;top:391px;width:1px;height:42px;background:#e6e6e6"></div>
<div style="position:absolute;left:393px;top:391px;width:1px;height:42px;background:#e6e6e6"></div>
<div style="position:absolute;left:555px;top:391px;width:1px;height:42px;background:#e6e6e6"></div>
<div style="position:absolute;left:658px;top:391px;width:1px;height:42px;background:#e6e6e6"></div>
<div style="position:absolute;left:775px;top:391px;width:1px;height:42px;background:#e6e6e6"></div>
<div style="position:absolute;left:39px;top:433px;width:760px;height:1px;background:#e6e6e6"></div>
<svg style="position:absolute;left:62px;top:411px" width="22" height="22" viewBox="0 0 22 22"><path d="M11 1.5 L13.6 8 L20.5 8.4 L15.2 12.8 L17 19.6 L11 15.8 L5 19.6 L6.8 12.8 L1.5 8.4 L8.4 8 Z" fill="#fff" stroke="#c9c9c9" stroke-width="1"/></svg>
<div class="t" style="left:296.6px;top:398.63px;font-size:12.03px;color:#333;transform:scaleX(0.9259);transform-origin:0 0;">РА00-000011</div>
<div class="t" style="left:397.2px;top:398.58px;font-size:12.18px;color:#333;transform:scaleX(0.9259);transform-origin:0 0;">26.08.2024 17:07:33</div>
<div class="t" style="left:558.5px;top:398.71px;font-size:11.82px;color:#333;transform:scaleX(0.9259);transform-origin:0 0;">Атлантика</div>
<div class="t" style="left:662.1px;top:398.62px;font-size:12.06px;color:#333;transform:scaleX(0.9259);transform-origin:0 0;">ОАО Атлантика</div>
<div style="position:absolute;left:776px;top:391px;width:21px;height:42px;overflow:hidden"><div style="position:absolute;left:-776px;top:-391px">
<div class="t" style="left:778.1px;top:398.62px;font-size:12.06px;color:#333;transform:scaleX(0.9259);transform-origin:0 0;">Проект</div>
</div></div>
<div class="t" style="left:88.6px;top:426.52px;font-size:12.37px;color:#333;transform:scaleX(0.9259);transform-origin:0 0;">Заявка на расходование ДС</div>
</div>
<div style="position:absolute;left:799px;top:226px;width:1px;height:415px;background:#a9a9a9"></div>
<div style="position:absolute;left:804px;top:85px;width:0;height:556px;border-left:1px dashed #c8c8c8"></div>
<div class="t" style="left:810px;top:94.20px;font-size:14.71px;color:#1c9b4b;transform:scaleX(0.9346);transform-origin:0 0;">Настройки</div>
<div style="position:absolute;left:809px;top:129px;width:673px;height:512px;border:1px solid #bdbdbd;border-bottom:none;box-sizing:border-box;background:#fff"></div>
<div class="tab" style="left:809px;top:105px;width:115px;height:25px"></div>
<div class="tab act" style="left:923px;top:105px;width:108px;height:25px"></div>
<div class="tab" style="left:1030px;top:105px;width:59px;height:25px"></div>
<div class="tab" style="left:1088px;top:105px;width:80px;height:25px"></div>
<div class="tab" style="left:1167px;top:105px;width:88px;height:25px"></div>
<div class="t" style="left:819.2px;top:117.12px;font-size:11.76px;color:#333;transform:scaleX(0.9259);transform-origin:0 0;">Быстрые фильтры</div>
<div class="t" style="left:931.7px;top:117.00px;font-size:12.13px;color:#333;transform:scaleX(0.9259);transform-origin:0 0;">Выбранные поля</div>
<div class="t" style="left:1039px;top:117.12px;font-size:11.77px;color:#333;transform:scaleX(0.9259);transform-origin:0 0;">Отборы</div>
<div class="t" style="left:1097.3px;top:117.04px;font-size:12.01px;color:#333;transform:scaleX(0.9259);transform-origin:0 0;">Сортировка</div>
<div class="t" style="left:1177px;top:117.12px;font-size:11.77px;color:#333;transform:scaleX(0.9259);transform-origin:0 0;">Оформление</div>
<div class="btn" style="left:819px;top:137px;width:137px;height:23px;"></div>
<div class="t" style="left:831px;top:149.38px;font-size:12.17px;color:#444;transform:scaleX(0.9259);transform-origin:0 0;">Добавить новое поле</div>
<div class="btn" style="left:973px;top:137px;width:132px;height:23px;"></div>
<div class="t" style="left:985.8px;top:149.38px;font-size:12.18px;color:#444;transform:scaleX(0.9259);transform-origin:0 0;">Сгруппировать поля</div>
<div class="btn dis" style="left:1122px;top:137px;width:67px;height:23px"></div>
<div class="t" style="left:1134.7px;top:148.80px;font-size:11.83px;color:#8c8c8c;transform:scaleX(0.9259);transform-origin:0 0;">Удалить</div>
<div class="btn" style="left:1207px;top:137px;width:53px;height:23px;"></div>
<div style="position:absolute;left:1233px;top:138px;width:2px;height:21px;background:#dcdcdc"></div>
<svg style="position:absolute;left:1214px;top:142px" width="12" height="12" viewBox="0 0 12 12"><path d="M6 1.2 L10.8 6.4 H8 V11.2 H4 V6.4 H1.2 Z" fill="#4ab2ee" stroke="#2a8ad0" stroke-width="0.7" stroke-linejoin="round"/></svg>
<svg style="position:absolute;left:1240px;top:142px" width="12" height="12" viewBox="0 0 12 12"><path d="M5.6 11.2 L10.3 6 H7.6 V1.2 H3.6 V6 H0.9 Z" fill="#4ab2ee" stroke="#2a8ad0" stroke-width="0.7" stroke-linejoin="round"/></svg>
<div class="btn" style="left:1419px;top:137px;width:54px;height:23px;"></div>
<div class="t" style="left:1431.2px;top:148.78px;font-size:12.74px;color:#444;transform:scaleX(0.9259);transform-origin:0 0;">Еще</div>
<svg style="position:absolute;left:1461px;top:147.5px" width="6" height="4" viewBox="0 0 6 4"><path d="M0.2 0 H5.6 L2.9 2.8 Z" fill="#555"/></svg>
<div style="position:absolute;left:819px;top:167px;width:654px;height:474px;border:1px solid #a9a9a9;border-bottom:none;box-sizing:border-box;background:#fff"></div>
<div style="position:absolute;left:820px;top:168px;width:652px;height:27px;background:#f0f0f0"></div>
<div style="position:absolute;left:849px;top:168px;width:1px;height:27px;background:#dcdcdc"></div>
<div style="position:absolute;left:820px;top:195px;width:652px;height:1px;background:#c8c8c8"></div>
<div class="t" style="left:857.2px;top:181.03px;font-size:11.47px;color:#555;transform:scaleX(0.9259);transform-origin:0 0;">Поле</div>
<div style="position:absolute;left:820px;top:197px;width:29px;height:23px;border:2px solid #f5c518;box-sizing:border-box"></div>
<svg style="position:absolute;left:858px;top:202px" width="11" height="11" viewBox="0 0 11 11"><circle cx="5" cy="5.5" r="3.9" fill="none" stroke="#999" stroke-width="1"/><path d="M3 5.5 H7" stroke="#888" stroke-width="1"/></svg>
<div class="t" style="left:875.3px;top:208.40px;font-size:12.13px;color:#333;transform:scaleX(0.9259);transform-origin:0 0;">Выбранные поля</div>
<div style="position:absolute;left:820px;top:221px;width:652px;height:1px;background:#e6e6e6"></div>
<div style="position:absolute;left:820px;top:246px;width:652px;height:1px;background:#e6e6e6"></div>
<div style="position:absolute;left:820px;top:272px;width:652px;height:1px;background:#e6e6e6"></div>
<div style="position:absolute;left:820px;top:297px;width:652px;height:1px;background:#e6e6e6"></div>
<div style="position:absolute;left:820px;top:323px;width:652px;height:1px;background:#e6e6e6"></div>
<div style="position:absolute;left:820px;top:348px;width:652px;height:1px;background:#e6e6e6"></div>
<div style="position:absolute;left:820px;top:374px;width:652px;height:1px;background:#e6e6e6"></div>
<div style="position:absolute;left:820px;top:400px;width:652px;height:1px;background:#e6e6e6"></div>
<div style="position:absolute;left:820px;top:425px;width:652px;height:1px;background:#e6e6e6"></div>
<div style="position:absolute;left:820px;top:451px;width:652px;height:1px;background:#e6e6e6"></div>
<div style="position:absolute;left:820px;top:476px;width:652px;height:1px;background:#e6e6e6"></div>
<div style="position:absolute;left:820px;top:502px;width:652px;height:1px;background:#e6e6e6"></div>
<div style="position:absolute;left:820px;top:527px;width:652px;height:1px;background:#e6e6e6"></div>
<div style="position:absolute;left:820px;top:553px;width:652px;height:1px;background:#e6e6e6"></div>
<div style="position:absolute;left:820px;top:579px;width:652px;height:1px;background:#e6e6e6"></div>
<div style="position:absolute;left:820px;top:604px;width:652px;height:1px;background:#e6e6e6"></div>
<div class="chk" style="left:828px;top:227px"></div>
<svg style="position:absolute;left:829px;top:225px" width="14" height="12" viewBox="0 0 14 12"><path d="M1.9 6.9 L5.1 10.2 L12 2" fill="none" stroke="#089c3e" stroke-width="2.3" stroke-linecap="round" stroke-linejoin="round"/></svg>
<svg style="position:absolute;left:892px;top:232px" width="11" height="5" viewBox="0 0 11 5"><rect x="1.3" y="1.2" width="8.4" height="2.7" rx="1.35" fill="#a9c4dc" stroke="#5b84a8" stroke-width="1"/></svg>
<div class="t" style="left:913.1px;top:234.12px;font-size:12.26px;color:#333;transform:scaleX(0.9259);transform-origin:0 0;">Есть файлы</div>
<div class="chk" style="left:828px;top:252px"></div>
<svg style="position:absolute;left:829px;top:250px" width="14" height="12" viewBox="0 0 14 12"><path d="M1.9 6.9 L5.1 10.2 L12 2" fill="none" stroke="#089c3e" stroke-width="2.3" stroke-linecap="round" stroke-linejoin="round"/></svg>
<svg style="position:absolute;left:892px;top:257px" width="11" height="5" viewBox="0 0 11 5"><rect x="1.3" y="1.2" width="8.4" height="2.7" rx="1.35" fill="#a9c4dc" stroke="#5b84a8" stroke-width="1"/></svg>
<div class="t" style="left:913.1px;top:259.69px;font-size:12.26px;color:#333;transform:scaleX(0.9259);transform-origin:0 0;">Элемент управления</div>
<div class="chk" style="left:828px;top:278px"></div>
<svg style="position:absolute;left:829px;top:276px" width="14" height="12" viewBox="0 0 14 12"><path d="M1.9 6.9 L5.1 10.2 L12 2" fill="none" stroke="#089c3e" stroke-width="2.3" stroke-linecap="round" stroke-linejoin="round"/></svg>
<svg style="position:absolute;left:892px;top:283px" width="11" height="5" viewBox="0 0 11 5"><rect x="1.3" y="1.2" width="8.4" height="2.7" rx="1.35" fill="#a9c4dc" stroke="#5b84a8" stroke-width="1"/></svg>
<div class="t" style="left:913.1px;top:285.26px;font-size:12.26px;color:#333;transform:scaleX(0.9259);transform-origin:0 0;">Тип документа</div>
<div class="chk" style="left:828px;top:303px"></div>
<svg style="position:absolute;left:829px;top:301px" width="14" height="12" viewBox="0 0 14 12"><path d="M1.9 6.9 L5.1 10.2 L12 2" fill="none" stroke="#089c3e" stroke-width="2.3" stroke-linecap="round" stroke-linejoin="round"/></svg>
<svg style="position:absolute;left:892px;top:308px" width="11" height="5" viewBox="0 0 11 5"><rect x="1.3" y="1.2" width="8.4" height="2.7" rx="1.35" fill="#a9c4dc" stroke="#5b84a8" stroke-width="1"/></svg>
<div class="t" style="left:913.1px;top:310.83px;font-size:12.26px;color:#333;transform:scaleX(0.9259);transform-origin:0 0;">Номер</div>
<div class="chk" style="left:828px;top:329px"></div>
<svg style="position:absolute;left:829px;top:327px" width="14" height="12" viewBox="0 0 14 12"><path d="M1.9 6.9 L5.1 10.2 L12 2" fill="none" stroke="#089c3e" stroke-width="2.3" stroke-linecap="round" stroke-linejoin="round"/></svg>
<svg style="position:absolute;left:892px;top:334px" width="11" height="5" viewBox="0 0 11 5"><rect x="1.3" y="1.2" width="8.4" height="2.7" rx="1.35" fill="#a9c4dc" stroke="#5b84a8" stroke-width="1"/></svg>
<div class="t" style="left:913.1px;top:336.40px;font-size:12.26px;color:#333;transform:scaleX(0.9259);transform-origin:0 0;">Дата</div>
<div class="chk" style="left:828px;top:355px"></div>
<svg style="position:absolute;left:829px;top:352px" width="14" height="12" viewBox="0 0 14 12"><path d="M1.9 6.9 L5.1 10.2 L12 2" fill="none" stroke="#089c3e" stroke-width="2.3" stroke-linecap="round" stroke-linejoin="round"/></svg>
<svg style="position:absolute;left:892px;top:359px" width="11" height="5" viewBox="0 0 11 5"><rect x="1.3" y="1.2" width="8.4" height="2.7" rx="1.35" fill="#a9c4dc" stroke="#5b84a8" stroke-width="1"/></svg>
<div class="t" style="left:913.1px;top:361.97px;font-size:12.26px;color:#333;transform:scaleX(0.9259);transform-origin:0 0;">Организация</div>
<div class="chk" style="left:828px;top:380px"></div>
<svg style="position:absolute;left:829px;top:378px" width="14" height="12" viewBox="0 0 14 12"><path d="M1.9 6.9 L5.1 10.2 L12 2" fill="none" stroke="#089c3e" stroke-width="2.3" stroke-linecap="round" stroke-linejoin="round"/></svg>
<svg style="position:absolute;left:894px;top:382px" width="7" height="12" viewBox="0 0 7 12"><defs><linearGradient id="lf" x1="0" y1="0" x2="1" y2="1"><stop offset="0" stop-color="#c2ec36"/><stop offset="0.6" stop-color="#52c21c"/><stop offset="1" stop-color="#239a12"/></linearGradient></defs><path d="M0.8 4.5 Q1 2.2 3.5 1.2 L6 0.8 L6 9 Q5.5 10.5 3.5 11 L0.8 11.3 Z" fill="url(#lf)"/></svg>
<div class="t" style="left:913.1px;top:387.54px;font-size:12.26px;color:#333;transform:scaleX(0.9259);transform-origin:0 0;">ЦФО</div>
<div class="chk" style="left:828px;top:406px"></div>
<svg style="position:absolute;left:829px;top:404px" width="14" height="12" viewBox="0 0 14 12"><path d="M1.9 6.9 L5.1 10.2 L12 2" fill="none" stroke="#089c3e" stroke-width="2.3" stroke-linecap="round" stroke-linejoin="round"/></svg>
<svg style="position:absolute;left:894px;top:408px" width="7" height="12" viewBox="0 0 7 12"><defs><linearGradient id="lf" x1="0" y1="0" x2="1" y2="1"><stop offset="0" stop-color="#c2ec36"/><stop offset="0.6" stop-color="#52c21c"/><stop offset="1" stop-color="#239a12"/></linearGradient></defs><path d="M0.8 4.5 Q1 2.2 3.5 1.2 L6 0.8 L6 9 Q5.5 10.5 3.5 11 L0.8 11.3 Z" fill="url(#lf)"/></svg>
<div class="t" style="left:913.1px;top:413.11px;font-size:12.26px;color:#333;transform:scaleX(0.9259);transform-origin:0 0;">Статья оборотов</div>
<div class="chk" style="left:828px;top:431px"></div>
<svg style="position:absolute;left:829px;top:429px" width="14" height="12" viewBox="0 0 14 12"><path d="M1.9 6.9 L5.1 10.2 L12 2" fill="none" stroke="#089c3e" stroke-width="2.3" stroke-linecap="round" stroke-linejoin="round"/></svg>
<svg style="position:absolute;left:892px;top:436px" width="11" height="5" viewBox="0 0 11 5"><rect x="1.3" y="1.2" width="8.4" height="2.7" rx="1.35" fill="#a9c4dc" stroke="#5b84a8" stroke-width="1"/></svg>
<div class="t" style="left:913.1px;top:438.68px;font-size:12.26px;color:#333;transform:scaleX(0.9259);transform-origin:0 0;">Проект</div>
<div class="chk" style="left:828px;top:457px"></div>
<svg style="position:absolute;left:829px;top:455px" width="14" height="12" viewBox="0 0 14 12"><path d="M1.9 6.9 L5.1 10.2 L12 2" fill="none" stroke="#089c3e" stroke-width="2.3" stroke-linecap="round" stroke-linejoin="round"/></svg>
<svg style="position:absolute;left:892px;top:462px" width="11" height="5" viewBox="0 0 11 5"><rect x="1.3" y="1.2" width="8.4" height="2.7" rx="1.35" fill="#a9c4dc" stroke="#5b84a8" stroke-width="1"/></svg>
<div class="t" style="left:913.1px;top:464.25px;font-size:12.26px;color:#333;transform:scaleX(0.9259);transform-origin:0 0;">Сумма документа</div>
<div class="chk" style="left:828px;top:482px"></div>
<svg style="position:absolute;left:829px;top:480px" width="14" height="12" viewBox="0 0 14 12"><path d="M1.9 6.9 L5.1 10.2 L12 2" fill="none" stroke="#089c3e" stroke-width="2.3" stroke-linecap="round" stroke-linejoin="round"/></svg>
<svg style="position:absolute;left:892px;top:487px" width="11" height="5" viewBox="0 0 11 5"><rect x="1.3" y="1.2" width="8.4" height="2.7" rx="1.35" fill="#a9c4dc" stroke="#5b84a8" stroke-width="1"/></svg>
<div class="t" style="left:913.1px;top:489.82px;font-size:12.26px;color:#333;transform:scaleX(0.9259);transform-origin:0 0;">Контрагент</div>
<div class="chk" style="left:828px;top:508px"></div>
<svg style="position:absolute;left:829px;top:506px" width="14" height="12" viewBox="0 0 14 12"><path d="M1.9 6.9 L5.1 10.2 L12 2" fill="none" stroke="#089c3e" stroke-width="2.3" stroke-linecap="round" stroke-linejoin="round"/></svg>
<svg style="position:absolute;left:892px;top:513px" width="11" height="5" viewBox="0 0 11 5"><rect x="1.3" y="1.2" width="8.4" height="2.7" rx="1.35" fill="#a9c4dc" stroke="#5b84a8" stroke-width="1"/></svg>
<div class="t" style="left:913.1px;top:515.39px;font-size:12.26px;color:#333;transform:scaleX(0.9259);transform-origin:0 0;">Назначение платежа (упр.)</div>
<div class="chk" style="left:828px;top:534px"></div>
<svg style="position:absolute;left:829px;top:531px" width="14" height="12" viewBox="0 0 14 12"><path d="M1.9 6.9 L5.1 10.2 L12 2" fill="none" stroke="#089c3e" stroke-width="2.3" stroke-linecap="round" stroke-linejoin="round"/></svg>
<svg style="position:absolute;left:892px;top:538px" width="11" height="5" viewBox="0 0 11 5"><rect x="1.3" y="1.2" width="8.4" height="2.7" rx="1.35" fill="#a9c4dc" stroke="#5b84a8" stroke-width="1"/></svg>
<div class="t" style="left:913.1px;top:540.96px;font-size:12.26px;color:#333;transform:scaleX(0.9259);transform-origin:0 0;">Валюта документа</div>
<div class="chk" style="left:828px;top:559px"></div>
<svg style="position:absolute;left:829px;top:557px" width="14" height="12" viewBox="0 0 14 12"><path d="M1.9 6.9 L5.1 10.2 L12 2" fill="none" stroke="#089c3e" stroke-width="2.3" stroke-linecap="round" stroke-linejoin="round"/></svg>
<svg style="position:absolute;left:892px;top:564px" width="11" height="5" viewBox="0 0 11 5"><rect x="1.3" y="1.2" width="8.4" height="2.7" rx="1.35" fill="#a9c4dc" stroke="#5b84a8" stroke-width="1"/></svg>
<div class="t" style="left:913.1px;top:566.53px;font-size:12.26px;color:#333;transform:scaleX(0.9259);transform-origin:0 0;">Договор контрагента</div>
<div class="chk" style="left:828px;top:585px"></div>
<svg style="position:absolute;left:829px;top:583px" width="14" height="12" viewBox="0 0 14 12"><path d="M1.9 6.9 L5.1 10.2 L12 2" fill="none" stroke="#089c3e" stroke-width="2.3" stroke-linecap="round" stroke-linejoin="round"/></svg>
<svg style="position:absolute;left:892px;top:590px" width="11" height="5" viewBox="0 0 11 5"><rect x="1.3" y="1.2" width="8.4" height="2.7" rx="1.35" fill="#a9c4dc" stroke="#5b84a8" stroke-width="1"/></svg>
<div class="t" style="left:913.1px;top:592.10px;font-size:12.26px;color:#333;transform:scaleX(0.9259);transform-origin:0 0;">К установке</div><div id="frame"></div></body></html>
